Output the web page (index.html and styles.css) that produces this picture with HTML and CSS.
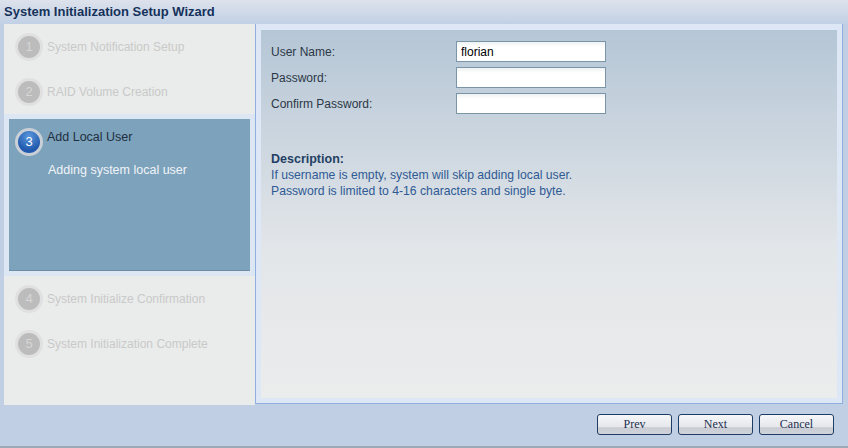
FILE: index.html
```html
<!DOCTYPE html>
<html lang="en">
<head>
  <meta charset="UTF-8">
  <title>System Initialization Setup Wizard</title>
  <link rel="stylesheet" href="styles.css">
</head>
<body>
  <div class="wizard">
    <div class="wizard-title">System Initialization Setup Wizard</div>

    <div class="wizard-main">
      <!-- steps -->
      <div class="steps">
        <div class="step">
          <span class="step-num">1</span>
          <span class="step-name">System Notification Setup</span>
        </div>
        <div class="step">
          <span class="step-num">2</span>
          <span class="step-name">RAID Volume Creation</span>
        </div>
        <div class="step-active">
          <div class="step-active-inner">
            <span class="step-num">3</span>
            <div class="step-text">
              <div class="step-name">Add Local User</div>
              <div class="step-desc">Adding system local user</div>
            </div>
          </div>
        </div>
        <div class="step">
          <span class="step-num">4</span>
          <span class="step-name">System Initialize Confirmation</span>
        </div>
        <div class="step">
          <span class="step-num">5</span>
          <span class="step-name">System Initialization Complete</span>
        </div>
      </div>

      <!-- form -->
      <div class="content">
        <div class="content-inner">
          <div class="form">
            <label class="form-label" for="username">User Name:</label>
            <input class="form-input" id="username" type="text" value="florian">
            <label class="form-label" for="pwd">Password:</label>
            <input class="form-input" id="pwd" type="password">
            <label class="form-label" for="pwd2">Confirm Password:</label>
            <input class="form-input" id="pwd2" type="password">
          </div>
          <div class="description">
            <div class="description-title">Description:</div>
            <div>If username is empty, system will skip adding local user.</div>
            <div>Password is limited to 4-16 characters and single byte.</div>
          </div>
        </div>
      </div>
    </div>

    <div class="wizard-footer">
      <button class="btn">Prev</button>
      <button class="btn">Next</button>
      <button class="btn">Cancel</button>
    </div>
  </div>
</body>
</html>
```

FILE: styles.css
```css
body {
  margin: 0;
  background: #c0cfe3;
  font-family: 'Liberation Sans', Arial, sans-serif;
  font-size: 12px;
}
.wizard {
  width: 848px;
  height: 448px;
  display: flex;
  flex-direction: column;
  background: #c0cfe3;
  box-sizing: border-box;
  border-bottom: 2px solid #9ea9b8;
}
.wizard-title {
  height: 24px;
  line-height: 24px;
  padding-left: 4px;
  font-weight: bold;
  font-size: 13px;
  color: #15325a;
  background: linear-gradient(#dde2ec, #c1d0e5);
  box-sizing: border-box;
}
.wizard-main {
  display: flex;
  padding-left: 4px;
  height: 381px;
}
.steps {
  width: 251px;
  background: #eaeceb;
}
.step {
  height: 45px;
  display: flex;
  align-items: center;
  padding-left: 11px;
}
.step-num {
  width: 22px;
  height: 22px;
  border-radius: 50%;
  border: 3px solid #e0e0e0;
  background: #bcbcbc;
  color: #d6d6d6;
  font-size: 13px;
  line-height: 22px;
  text-align: center;
  flex: none;
}
.step-name {
  margin-left: 4px;
  color: #c9c9c9;
  font-size: 12px;
}
.step-active {
  height: 162px;
  padding: 5px;
  background: #dde6f3;
  box-sizing: border-box;
}
.step-active-inner {
  height: 100%;
  background: #7ca2bc;
  border-bottom: 1px solid #6b8fa8;
  box-sizing: border-box;
  display: flex;
  align-items: flex-start;
  padding: 9px 0 0 6px;
}
.step-active .step-num {
  border-color: #c9cfd6;
  background: radial-gradient(circle at 50% 25%, #5a96dc, #2059ad 70%);
  color: #fff;
}
.step-text {
  padding-top: 1px;
  line-height: 16px;
}
.step-active .step-name {
  color: #1f2f40;
  font-size: 12.5px;
}
.step-desc {
  margin: 17px 0 0 5px;
  color: #f1f4f7;
  font-size: 12.5px;
}
.content {
  width: 588px;
  height: 380px;
  box-sizing: border-box;
  border: 1px solid #8fb0df;
  border-top: none;
  background: #dde7f6;
  padding: 6px 5px 5px 5px;
}
.content-inner {
  height: 100%;
  background: linear-gradient(#b5c6d6, #e3e6e9 60%, #ebecec);
  padding: 11px 10px;
  box-sizing: border-box;
}
.form {
  display: grid;
  grid-template-columns: 185px 150px;
  grid-auto-rows: 21px;
  row-gap: 5px;
  align-items: center;
}
.form-label {
  color: #2c3846;
}
.form-input {
  width: 150px;
  height: 21px;
  box-sizing: border-box;
  border: 1px solid #7a95a8;
  background: linear-gradient(#eef2f2, #fff 5px);
  padding: 0 4px;
  font-family: 'Liberation Sans', Arial, sans-serif;
  font-size: 12px;
  color: #000;
  outline: none;
}
.description {
  margin-top: 37px;
  line-height: 16px;
  font-size: 12.2px;
  color: #2f5a94;
}
.description-title {
  font-weight: bold;
  font-size: 12.5px;
  color: #243f63;
}
.wizard-footer {
  flex: 1;
  display: flex;
  justify-content: flex-end;
  align-items: flex-start;
  gap: 6px;
  padding: 9px 14px 0 0;
}
.btn {
  width: 75px;
  height: 21px;
  border: 1px solid #1e3d64;
  border-radius: 3px;
  background: linear-gradient(#f6f7f9, #e4e6ea 65%, #c9ccd3 66%, #d0d3d9);
  font-family: 'Liberation Serif', 'Times New Roman', serif;
  font-size: 12px;
  color: #1b3050;
  padding: 0;
}
```
